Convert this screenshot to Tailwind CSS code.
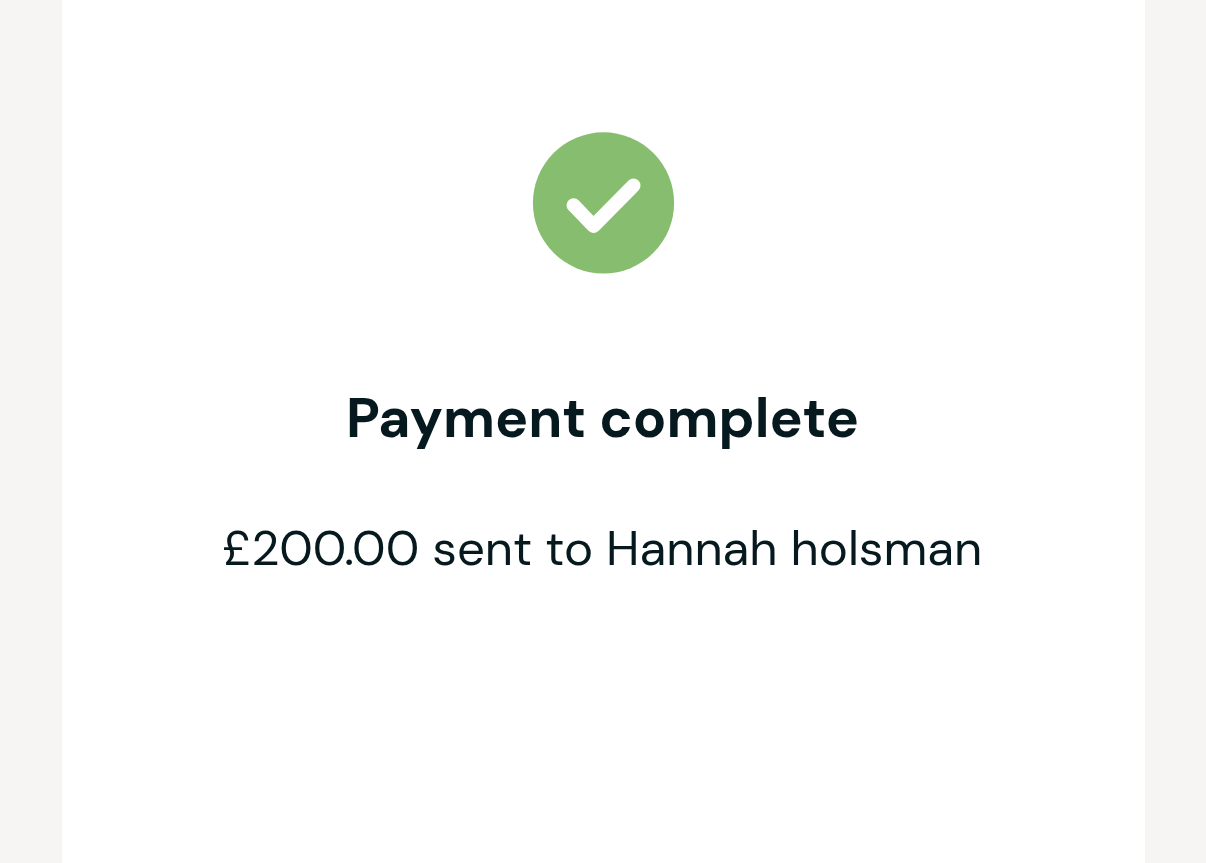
<!DOCTYPE html>
<html lang="en">
  <head>
    <meta charset="UTF-8" />
    <meta name="viewport" content="width=device-width, initial-scale=1.0" />
    <title>Payment complete</title>
    <script src="https://cdn.jsdelivr.net/npm/@tailwindcss/browser@4"></script>
  </head>
  <body class="h-screen overflow-hidden bg-[#f6f5f3] font-['DM_Sans','Inter',sans-serif] text-[#06191f]">
    <main class="mx-auto flex h-full w-[1083px] flex-col items-center bg-white pt-[132px]">
      <svg class="h-[142px] w-[142px] overflow-visible" viewBox="0 0 142 142" fill="none" aria-hidden="true">
        <circle cx="71.5" cy="70.9" r="70.6" fill="#87bd6e" />
        <path d="M41.5 73.2 L61.5 94 L101.5 53.5" stroke="white" stroke-width="14" stroke-linecap="round" stroke-linejoin="round" />
      </svg>
      <h1 class="mt-[108px] pr-px text-[55.3px] leading-[72px] font-bold whitespace-nowrap">Payment complete</h1>
      <p class="mt-[62px] pr-[2px] text-[49.1px] leading-[64px] whitespace-nowrap">£200.00 sent to Hannah holsman</p>
    </main>
  </body>
</html>
